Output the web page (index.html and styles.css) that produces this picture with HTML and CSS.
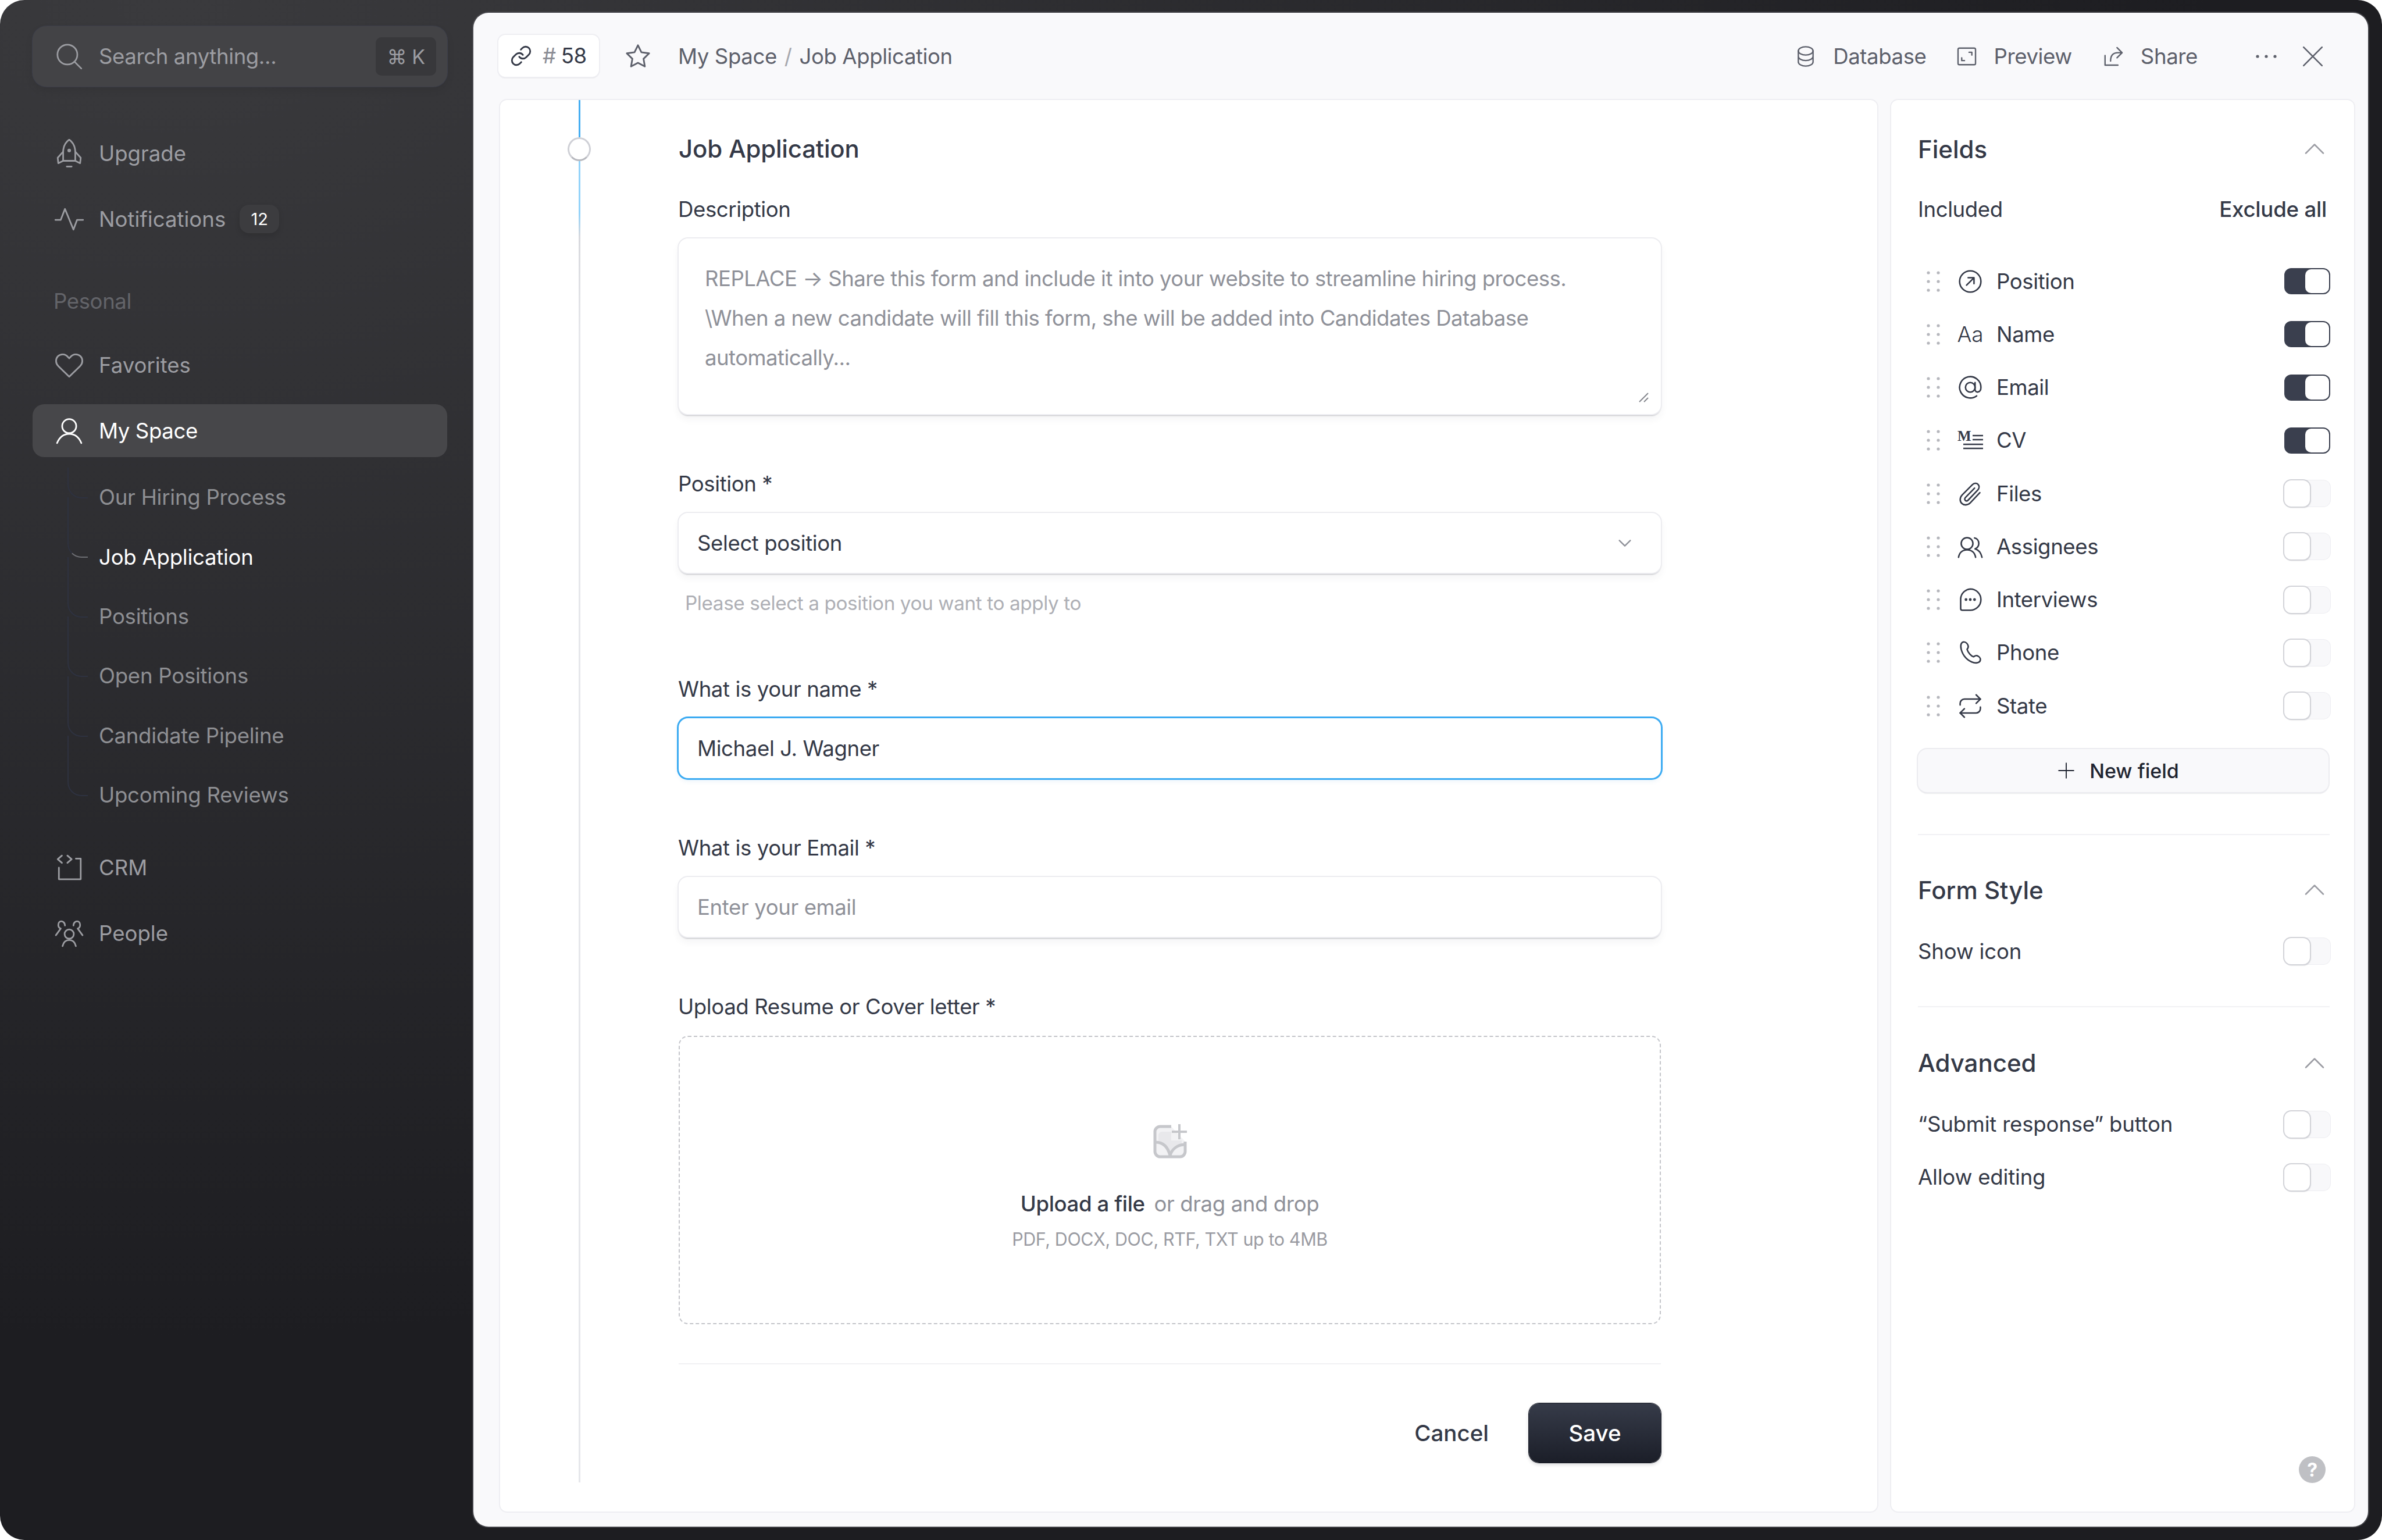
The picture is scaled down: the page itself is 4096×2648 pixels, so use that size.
FILE: index.html
```html
<!DOCTYPE html>
<html lang="en">
<head>
    <meta charset="UTF-8">
    <meta name="viewport" content="width=device-width, initial-scale=1.0">
    <title>Job Application</title>
    <link rel="stylesheet" href="styles.css">
</head>
<body>
    <!-- Shared icons -->
    <svg class="icon-defs" xmlns="http://www.w3.org/2000/svg">
        <symbol id="i-grip" viewBox="0 0 26 38">
            <circle cx="4" cy="4" r="2.6" /><circle cx="21" cy="4" r="2.6" />
            <circle cx="4" cy="19" r="2.6" /><circle cx="21" cy="19" r="2.6" />
            <circle cx="4" cy="34" r="2.6" /><circle cx="21" cy="34" r="2.6" />
        </symbol>
        <symbol id="i-up" viewBox="0 0 24 24"><path d="M3 16.5 12 7.5l9 9" /></symbol>
    </svg>

    <div class="app">
        <!-- Sidebar -->
        <aside class="sidebar">
            <div class="search">
                <svg class="icon search-icon" viewBox="0 0 24 24"><circle cx="10.5" cy="10.5" r="8.2" /><path d="M16.5 16.5 22 22" /></svg>
                <span class="search-text">Search anything...</span>
                <span class="kbd">⌘ K</span>
            </div>

            <nav class="nav">
                <a class="nav-item">
                    <svg class="icon nav-icon" viewBox="0 0 24 24"><path d="M12 .5C8.500 3 7 7 7 11v7h10v-7c0-4-1.500-8-5-10.500z" /><circle cx="12" cy="9.500" r=".8" /><path d="M7 10.500 2.500 15.500l.5 4.500 4-2M17 10.500l4.500 5-.5 4.500-4-2M10 22.700h4" /></svg>
                    <span>Upgrade</span>
                </a>
                <a class="nav-item">
                    <svg class="icon nav-icon" viewBox="0 0 24 24"><path d="M.5 12.500H5L8.500 3.500 15.500 20.500l3-8h5" /></svg>
                    <span>Notifications</span>
                    <span class="badge">12</span>
                </a>
                <div class="nav-label">Pesonal</div>
                <a class="nav-item">
                    <svg class="icon nav-icon" viewBox="0 0 24 24"><path d="M12 21.500 3 12.700C.6 10.300.6 6.800 2.700 4.600c2.300-2.200 6-2 8 .3l1.300 1.400 1.300-1.400c2-2.300 5.700-2.500 8-.3 2.100 2.200 2.100 5.700-.3 8.100z" /></svg>
                    <span>Favorites</span>
                </a>
                <a class="nav-item nav-item-active">
                    <svg class="icon nav-icon" viewBox="0 0 24 24"><circle cx="12" cy="8" r="5.800" /><path d="M2 22c2-4.800 5.500-7.500 10-7.500s8 2.700 10 7.500" /></svg>
                    <span>My Space</span>
                </a>
                <div class="sub-nav">
                    <a class="sub-item">Our Hiring Process</a>
                    <a class="sub-item sub-item-active">Job Application</a>
                    <a class="sub-item">Positions</a>
                    <a class="sub-item">Open Positions</a>
                    <a class="sub-item">Candidate Pipeline</a>
                    <a class="sub-item">Upcoming Reviews</a>
                </div>
                <a class="nav-item nav-item-crm">
                    <svg class="icon nav-icon" viewBox="0 0 24 24"><path d="M3.500 12v9.500h18V4.500h-4M6 2 2.500 5 6 8M10.500 2 14 5l-3.500 3" /></svg>
                    <span>CRM</span>
                </a>
                <a class="nav-item">
                    <svg class="icon nav-icon" viewBox="0 0 24 24"><circle cx="12" cy="12.500" r="3.800" /><path d="M6.500 22.500c.8-3.300 2.800-5 5.500-5s4.700 1.700 5.500 5M8.500 5.500C8.500 3.500 7.200 2 5.600 2S3 3.300 3 5c0 1.400.8 2.500 2 3l-4 5.500M15.500 5.500c0-2 1.300-3.500 2.900-3.500S21 3.300 21 5c0 1.400-.8 2.500-2 3l4 5.500" /></svg>
                    <span>People</span>
                </a>
            </nav>
        </aside>

        <!-- Main panel -->
        <main class="panel">
            <header class="top-bar">
                <div class="ref-pill">
                    <svg class="icon link-icon" viewBox="0 0 24 24"><path d="M10 13a5 5 0 0 0 7.540.540l3-3a5 5 0 0 0-7.070-7.070l-1.720 1.710" /><path d="M14 11a5 5 0 0 0-7.540-.540l-3 3a5 5 0 0 0 7.070 7.070l1.710-1.710" /></svg>
                    <span class="ref-hash">#</span>
                    <span>58</span>
                </div>
                <svg class="icon star-icon" viewBox="0 0 24 24"><path d="M12 2l3.090 6.260L22 9.270l-5 4.870 1.180 6.880L12 17.770l-6.180 3.250L7 14.140 2 9.270l6.910-1.010z" /></svg>
                <div class="breadcrumb">My Space <span class="crumb-sep">/</span> Job Application</div>

                <div class="actions">
                    <a class="action action-db">
                        <svg class="icon action-icon" viewBox="0 0 24 24"><ellipse cx="12" cy="6" rx="8" ry="4.500" /><path d="M4 6v12c0 2.500 3.600 4.500 8 4.500s8-2 8-4.500V6M4 12c0 2.500 3.600 4.500 8 4.500s8-2 8-4.500" /></svg>
                        Database
                    </a>
                    <a class="action action-preview">
                        <svg class="icon action-icon" viewBox="0 0 24 24"><rect x="2.500" y="3" width="19" height="18" rx="1.500" /><path d="M14.500 7.500h3v3M6.500 13.500v3h3" /></svg>
                        Preview
                    </a>
                    <a class="action action-share">
                        <svg class="icon action-icon" viewBox="0 0 24 24"><path d="M3 11v10.500h14M21.500 8l-5.500-5.500M21.500 8 16 13.500M21.500 8H17c-5 0-8 3-8 9" /></svg>
                        Share
                    </a>
                    <svg class="icon more-icon" viewBox="0 0 40 12"><circle cx="5" cy="6" r="2.600" /><circle cx="20" cy="6" r="2.600" /><circle cx="35" cy="6" r="2.600" /></svg>
                    <svg class="icon close-icon" viewBox="0 0 24 24"><path d="M2 2l20 20M22 2 2 22" /></svg>
                </div>
            </header>

            <div class="panel-body">
                <!-- Form card -->
                <section class="form-card">
                    <div class="timeline">
                        <span class="timeline-top"></span>
                        <span class="timeline-dot"></span>
                        <span class="timeline-rest"></span>
                    </div>

                    <form class="form">
                        <h2 class="form-title">Job Application</h2>

                        <div class="field field-first">
                            <label class="field-label">Description</label>
                            <div class="area-wrap">
                                <textarea class="control control-area" placeholder="REPLACE → Share this form and include it into your website to streamline hiring process. &#10;\When a new candidate will fill this form, she will be added into Candidates Database automatically..."></textarea>
                                <svg class="area-grip" viewBox="0 0 17 17"><path d="M16 1 1 16M16 9l-7 7" /></svg>
                            </div>
                        </div>

                        <div class="field">
                            <label class="field-label">Position *</label>
                            <div class="control control-select">
                                <span>Select position</span>
                                <svg class="icon select-chevron" viewBox="0 0 24 24"><path d="M4 8l8 8 8-8" /></svg>
                            </div>
                            <p class="field-hint">Please select a position you want to apply to</p>
                        </div>

                        <div class="field field-name">
                            <label class="field-label">What is your name *</label>
                            <input class="control control-focus" type="text" value="Michael J. Wagner">
                        </div>

                        <div class="field">
                            <label class="field-label">What is your Email *</label>
                            <input class="control" type="text" placeholder="Enter your email">
                        </div>

                        <div class="field">
                            <label class="field-label">Upload Resume or Cover letter *</label>
                            <div class="dropzone">
                                <svg class="upload-icon" viewBox="0 0 60 60"><path d="M32 4H13a9 9 0 0 0-9 9v34a9 9 0 0 0 9 9h34a9 9 0 0 0 9-9V30" fill="#f2f2f4" stroke="#c6c7cb" stroke-width="5" /><path d="M32 13h-16a6 6 0 0 0-6 6v13c9 0 16 5 20 16 3-8 9-13 20-14v-6H32z" fill="#e8e8eb" /><path d="M5 31c12 0 21 7 25 23M30 54c3-11 12-18 25-19" fill="none" stroke="#c6c7cb" stroke-width="5" /><path d="M46 0v26M33 13h26" fill="none" stroke="#c6c7cb" stroke-width="4" /></svg>
                                <div class="drop-text"><strong>Upload a file</strong> or drag and drop</div>
                                <div class="drop-sub">PDF, DOCX, DOC, RTF, TXT up to 4MB</div>
                            </div>
                        </div>

                        <div class="form-footer">
                            <button class="btn-cancel" type="button">Cancel</button>
                            <button class="btn-save" type="button">Save</button>
                        </div>
                    </form>
                </section>

                <!-- Settings card -->
                <aside class="side-card">
                    <div class="side-head">
                        <h3>Fields</h3>
                        <svg class="icon side-chevron"><use href="#i-up" /></svg>
                    </div>
                    <div class="included">
                        <span>Included</span>
                        <a class="exclude">Exclude all</a>
                    </div>

                    <div class="field-list">
                        <div class="field-row">
                            <svg class="grip"><use href="#i-grip" /></svg>
                            <svg class="icon row-icon" viewBox="0 0 24 24"><circle cx="12" cy="12" r="10" /><path d="M8.500 15.500l7-7M10 8.500h5.500V14" /></svg>
                            <span class="row-label">Position</span>
                            <span class="toggle toggle-on"></span>
                        </div>
                        <div class="field-row">
                            <svg class="grip"><use href="#i-grip" /></svg>
                            <span class="row-glyph">Aa</span>
                            <span class="row-label">Name</span>
                            <span class="toggle toggle-on"></span>
                        </div>
                        <div class="field-row">
                            <svg class="grip"><use href="#i-grip" /></svg>
                            <svg class="icon row-icon" viewBox="0 0 24 24"><circle cx="12" cy="12" r="4.500" /><path d="M16.500 7.500v6.500c0 3.500 5.500 3.500 5.500-2a10 10 0 1 0-4 8" /></svg>
                            <span class="row-label">Email</span>
                            <span class="toggle toggle-on"></span>
                        </div>
                        <div class="field-row">
                            <svg class="grip"><use href="#i-grip" /></svg>
                            <svg class="row-icon md-icon" viewBox="0 0 44 36"><text x="0" y="19" class="md-letter">M</text><path d="M26 10h18M26 17h18M10 25h34M10 32h34" /></svg>
                            <span class="row-label">CV</span>
                            <span class="toggle toggle-on"></span>
                        </div>
                        <div class="field-row">
                            <svg class="grip"><use href="#i-grip" /></svg>
                            <svg class="icon row-icon" viewBox="0 0 24 24"><path d="M21 11l-9 9.500c-2.500 2.500-6 2.500-8 .5s-2-5.500.5-8L14 3.500c1.700-1.700 4-1.700 5.300-.3s1.300 3.600-.3 5.300l-9 9.500c-.9.900-2 .9-2.700.2s-.7-1.800.2-2.700l8.500-8.800" /></svg>
                            <span class="row-label">Files</span>
                            <span class="toggle"></span>
                        </div>
                        <div class="field-row">
                            <svg class="grip"><use href="#i-grip" /></svg>
                            <svg class="icon row-icon" viewBox="0 0 24 24"><circle cx="9" cy="9" r="5.500" /><path d="M1 22c.8-4.500 3.800-7 8-7s7.200 2.500 8 7M16 3.800c2.500.5 4 2.700 4 5.200 0 2-1 4-3.500 5 3 .8 5.500 3.500 6.500 8" /></svg>
                            <span class="row-label">Assignees</span>
                            <span class="toggle"></span>
                        </div>
                        <div class="field-row">
                            <svg class="grip"><use href="#i-grip" /></svg>
                            <svg class="icon row-icon" viewBox="0 0 24 24"><path d="M12 2a10 10 0 0 1 0 20H4.500A1.500 1.500 0 0 1 3 20.500V11a10 10 0 0 1 9-9z" /><circle cx="8" cy="12" r=".6" /><circle cx="12" cy="12" r=".6" /><circle cx="16" cy="12" r=".6" /></svg>
                            <span class="row-label">Interviews</span>
                            <span class="toggle"></span>
                        </div>
                        <div class="field-row">
                            <svg class="grip"><use href="#i-grip" /></svg>
                            <svg class="icon row-icon" viewBox="0 0 24 24"><path d="M6 2C3.500 2 2.500 5 3.500 9c1.500 6 6 11 12 12.500 3.500.8 6-.5 6-3 0-1.500-1.500-3-3-3.500-1.700-.5-2.500.5-3.500 1-2-.5-5-3.500-6-7 .8-1 1.500-2 1-3.500C9.500 4 8 2 6 2z" /></svg>
                            <span class="row-label">Phone</span>
                            <span class="toggle"></span>
                        </div>
                        <div class="field-row">
                            <svg class="grip"><use href="#i-grip" /></svg>
                            <svg class="icon row-icon" viewBox="0 0 24 24"><path d="M17.500 1.500l4 4-4 4" /><path d="M2.500 11V9.500a4 4 0 0 1 4-4h15" /><path d="M6.500 22.500l-4-4 4-4" /><path d="M21.500 13v1.500a4 4 0 0 1-4 4h-15" /></svg>
                            <span class="row-label">State</span>
                            <span class="toggle"></span>
                        </div>
                    </div>

                    <button class="new-field" type="button">
                        <svg class="icon plus-icon" viewBox="0 0 24 24"><path d="M12 1v22M1 12h22" /></svg>
                        New field
                    </button>

                    <hr class="side-rule">
                    <div class="side-head side-head-next">
                        <h3>Form Style</h3>
                        <svg class="icon side-chevron"><use href="#i-up" /></svg>
                    </div>
                    <div class="option-row option-first">
                        <span>Show icon</span>
                        <span class="toggle"></span>
                    </div>

                    <hr class="side-rule side-rule-tight">
                    <div class="side-head side-head-last">
                        <h3>Advanced</h3>
                        <svg class="icon side-chevron"><use href="#i-up" /></svg>
                    </div>
                    <div class="option-row option-first">
                        <span>“Submit response” button</span>
                        <span class="toggle"></span>
                    </div>
                    <div class="option-row">
                        <span>Allow editing</span>
                        <span class="toggle"></span>
                    </div>

                    <span class="help">?</span>
                </aside>
            </div>
        </main>
    </div>
</body>
</html>
```

FILE: styles.css
```css
* {
    box-sizing: border-box;
}

body {
    margin: 0;
    background: #fff;
    font-family: Inter, "Noto Sans", sans-serif;
    font-size: 36.6px;
    letter-spacing: -0.4px;
    color: #343947;
}

.icon-defs {
    display: none;
}

.icon {
    fill: none;
    stroke: currentColor;
    stroke-width: 1.5;
    stroke-linecap: round;
    stroke-linejoin: round;
    flex-shrink: 0;
}

.app {
    display: flex;
    height: 2648px;
    width: 4096px;
    overflow: hidden;
    border-radius: 42px;
    background: radial-gradient(ellipse 3500px 2300px at 300px 0, #3a3a3d, #1d1d21);
}

/* Sidebar */
.sidebar {
    width: 814px;
    flex-shrink: 0;
    padding: 45px 45px 0 56px;
    color: #9c9da2;
}

.search {
    display: flex;
    align-items: center;
    height: 104px;
    padding: 0 19px 0 38px;
    border-radius: 24px;
    background: #434346;
    box-shadow: 0 0 0 1px #3c3e4a, 0 6px 14px rgba(0, 0, 0, 0.08);
}

.search-icon {
    width: 50px;
    height: 50px;
    margin-right: 26px;
    stroke-width: 1.3;
}

.search-text {
    flex: 1;
}

.kbd {
    display: flex;
    align-items: center;
    justify-content: center;
    width: 104px;
    height: 66px;
    border-radius: 10px;
    background: #38383b;
    font-size: 34px;
}

.nav {
    display: flex;
    flex-direction: column;
    margin-top: 69px;
}

.nav-item {
    display: flex;
    align-items: center;
    height: 91px;
    padding-left: 38px;
    margin-bottom: 22px;
    border-radius: 20px;
    letter-spacing: 0;
}

.nav-icon {
    width: 50px;
    height: 50px;
    margin-right: 26px;
    stroke-width: 1.35;
}

.nav-item-active {
    margin-bottom: 0;
    background: #47474a;
    color: #fff;
    letter-spacing: -0.4px;
}

.nav-item-crm {
    margin-top: 28px;
}

.badge {
    display: flex;
    align-items: center;
    justify-content: center;
    width: 68px;
    height: 49px;
    margin-left: 24px;
    border-radius: 16px;
    background: #3c3c3f;
    color: #fff;
    font-size: 29px;
    box-shadow: 0 4px 10px rgba(0, 0, 0, 0.12);
}

.nav-label {
    height: 50px;
    line-height: 50px;
    margin: 49px 0 39px 36px;
    color: #636469;
}

.sub-nav {
    margin-top: 18px;
}

.sub-item {
    position: relative;
    display: flex;
    align-items: center;
    height: 102.4px;
    padding-left: 114px;
    color: #8e8f93;
    letter-spacing: -0.25px;
}

/* tree connector */
.sub-item::before {
    content: "";
    position: absolute;
    left: 60px;
    top: -51px;
    width: 33px;
    height: 102px;
    border-left: 2px solid #2e3240;
    border-bottom: 2px solid #2e3240;
    border-bottom-left-radius: 24px;
}

.sub-item:first-child::before {
    top: 0;
    height: 51px;
}

.sub-item-active {
    color: #fff;
}

.sub-item-active::before {
    border-bottom-color: #6c6d72;
}

/* Main panel */
.panel {
    flex: 1;
    display: flex;
    flex-direction: column;
    margin: 22px 24px 23px 0;
    border-radius: 26px;
    background: #f9f9fb;
    box-shadow: 0 0 0 2px rgba(80, 80, 86, 0.7);
    overflow: hidden;
}

.top-bar {
    display: flex;
    align-items: center;
    flex-shrink: 0;
    height: 148px;
    padding: 2px 76px 0 43px;
    color: #5d606b;
}

.ref-pill {
    display: flex;
    align-items: center;
    width: 173px;
    height: 72px;
    margin-top: -2px;
    padding-left: 20px;
    border-radius: 12px;
    background: #fff;
    color: #343947;
    box-shadow: 0 0 0 2px #eeeef2, 0 2px 2px rgba(50, 55, 70, 0.2);
}

.link-icon {
    width: 38px;
    height: 38px;
    margin-right: 18px;
    stroke-width: 1.8;
}

.ref-hash {
    color: #8b8d95;
    margin-right: 9px;
}

.star-icon {
    width: 46px;
    height: 46px;
    margin: 0 46px 0 44px;
}

.crumb-sep {
    color: #a7a8ae;
    margin: 0 3px;
}

.actions {
    display: flex;
    align-items: center;
    margin-left: auto;
}

.action {
    display: flex;
    align-items: center;
}

.action-icon {
    width: 38px;
    height: 38px;
    margin-right: 28px;
}

.action-db {
    margin-right: 50px;
}

.action-preview {
    margin-right: 52px;
}

.more-icon {
    width: 40px;
    height: 12px;
    margin-left: 98px;
    fill: currentColor;
    stroke: none;
}

.close-icon {
    width: 38px;
    height: 38px;
    margin-left: 41px;
    stroke-width: 1.6;
}

.panel-body {
    flex: 1;
    display: flex;
    gap: 20px;
    padding: 0 22px 24px 44px;
    min-height: 0;
}

.form-card {
    flex: 1;
    display: flex;
    border: 2px solid #eeeef2;
    border-radius: 14px;
    background: #fff;
}

.timeline {
    display: flex;
    flex-direction: column;
    align-items: center;
    width: 272px;
    margin-bottom: 50px;
    flex-shrink: 0;
}

.timeline-top {
    width: 3px;
    height: 64px;
    background: #45aef2;
}

.timeline-dot {
    width: 40px;
    height: 41px;
    border-radius: 50%;
    background: #fff;
    border: 3px solid #cfd0d6;
    border-bottom-color: #b8b9bf;
    flex-shrink: 0;
}

.timeline-rest {
    flex: 1;
    width: 3px;
    background: linear-gradient(#93d3fa 0, #93d3fa 90px, #d8d9de 130px, #e6e7eb 300px);
}

.form {
    width: 1689px;
    margin-left: 35px;
    padding-top: 54px;
}

.form-title {
    margin: 0;
    height: 60px;
    line-height: 60px;
    font-size: 42px;
    font-weight: 500;
    letter-spacing: -0.2px;
}

.field {
    margin-top: 96px;
}

.field-first {
    margin-top: 50px;
}

.field-name {
    margin-top: 104px;
}

.field-label {
    display: block;
    height: 48px;
    line-height: 48px;
    margin: 0 0 26px -1px;
}

.area-wrap {
    position: relative;
}

/* resize corner, drawn over the textarea */
.area-grip {
    position: absolute;
    right: 21px;
    bottom: 20px;
    width: 17px;
    height: 17px;
    fill: none;
    stroke: #85878e;
    stroke-width: 2;
}

.control {
    display: flex;
    align-items: center;
    width: 100%;
    height: 103px;
    padding: 0 32px;
    border: 0;
    border-radius: 16px;
    outline: 0;
    background: #fff;
    font: inherit;
    letter-spacing: inherit;
    color: #343947;
    box-shadow: 0 0 0 2px #ececf0, 0 3px 2px rgba(50, 55, 70, 0.28), 0 8px 14px rgba(50, 55, 70, 0.06);
}

.control::placeholder {
    color: #8f9199;
    opacity: 1;
}

.control-area {
    display: block;
    height: 302px;
    padding: 35px 45px;
    line-height: 68px;
    letter-spacing: -0.55px;
    resize: none;
}

.control-select {
    justify-content: space-between;
}

.select-chevron {
    width: 28px;
    height: 28px;
    margin-right: 16px;
    color: #8f9199;
    stroke-width: 2;
}

.control-focus {
    box-shadow: 0 0 0 3px #3cabf2, 0 4px 10px rgba(50, 130, 200, 0.12);
}

.field-hint {
    margin: 32px 0 0 11px;
    height: 40px;
    line-height: 40px;
    font-size: 33.3px;
    color: #aeafb5;
}

.dropzone {
    display: flex;
    flex-direction: column;
    align-items: center;
    height: 496px;
    padding-top: 150px;
    border: 2px dashed #c4c5ca;
    border-radius: 16px;
}

.upload-icon {
    width: 60px;
    height: 60px;
}

.drop-text {
    margin-top: 53px;
    height: 48px;
    line-height: 48px;
    color: #8f9199;
}

.drop-text strong {
    font-weight: 500;
    color: #343947;
    margin-right: 6px;
}

.drop-sub {
    margin-top: 17px;
    height: 40px;
    line-height: 40px;
    font-size: 30.5px;
    color: #9a9ba2;
}

.form-footer {
    display: flex;
    justify-content: flex-end;
    align-items: center;
    margin-top: 67px;
    padding-top: 67px;
    border-top: 2px solid #f1f1f4;
}

.btn-cancel {
    border: 0;
    background: none;
    padding: 0;
    margin-right: 69px;
    font: inherit;
    font-size: 38.5px;
    font-weight: 500;
    color: #343947;
}

.btn-save {
    width: 227px;
    height: 102px;
    border: 0;
    border-radius: 18px;
    background: linear-gradient(#363b49, #1b1e28);
    box-shadow: 0 0 0 1px #1b1e28, 0 3px 6px rgba(30, 30, 40, 0.2);
    color: #fff;
    font: inherit;
    font-size: 38.5px;
    font-weight: 500;
}

/* Settings card */
.side-card {
    position: relative;
    width: 800px;
    flex-shrink: 0;
    padding: 54px 42px 0 46px;
    border: 2px solid #eeeef2;
    border-radius: 14px;
    background: #fff;
}

.side-head {
    display: flex;
    justify-content: space-between;
    align-items: center;
    height: 60px;
}

.side-head h3 {
    margin: 0;
    font-size: 42px;
    font-weight: 500;
    letter-spacing: 0;
}

.side-chevron {
    width: 40px;
    height: 40px;
    margin-right: 6px;
    color: #9b9ca3;
}

.side-head-next {
    margin-top: 64px;
}

.side-head-last {
    margin-top: 66px;
}

.included {
    display: flex;
    justify-content: space-between;
    align-items: center;
    height: 48px;
    margin-top: 50px;
    padding-right: 5px;
}

.exclude {
    font-weight: 500;
    letter-spacing: -0.2px;
}

.field-list {
    margin-top: 54px;
}

.field-row,
.option-row {
    display: flex;
    align-items: center;
    height: 91.25px;
}

.field-row {
    padding-left: 14px;
}

.option-row {
    justify-content: space-between;
    letter-spacing: -0.2px;
}

.option-first {
    margin-top: 30px;
}

.grip {
    width: 26px;
    height: 38px;
    margin-right: 28px;
    fill: #b6b7bd;
    flex-shrink: 0;
}

.row-icon,
.row-glyph {
    width: 44px;
    height: 44px;
    margin-right: 23px;
    stroke-width: 1.4;
}

.row-glyph {
    display: flex;
    align-items: center;
    justify-content: center;
    font-size: 37px;
    font-weight: 300;
    letter-spacing: 0;
}

.md-icon {
    fill: none;
    stroke: #343947;
    stroke-width: 2.6;
}

.md-letter {
    fill: #343947;
    stroke: none;
    font-family: "Liberation Serif", serif;
    font-size: 25px;
    font-weight: 700;
}

.row-label {
    flex: 1;
}

.toggle {
    position: relative;
    display: block;
    width: 79px;
    height: 45px;
    margin-right: -1px;
    border-radius: 12px;
    background: #f8f8fa;
    box-shadow: 0 0 0 1px #eeeef2;
    flex-shrink: 0;
}

.toggle::after {
    content: "";
    position: absolute;
    top: 0;
    left: 0;
    width: 44px;
    height: 45px;
    border-radius: 12px;
    background: #fff;
    box-shadow: 0 0 0 2px #d2d3d8, 1px 2px 2px rgba(50, 55, 70, 0.25);
}

.toggle-on {
    background: #3a3f4e;
    box-shadow: none;
}

.toggle-on::after {
    left: auto;
    right: 2px;
    top: 2px;
    height: 41px;
    width: 41px;
    border-radius: 10px;
    box-shadow: none;
}

.new-field {
    display: flex;
    align-items: center;
    justify-content: center;
    width: 706px;
    height: 74px;
    margin-top: 29px;
    padding: 0 16px 0 0;
    border: 0;
    border-radius: 16px;
    background: #f9f9fb;
    box-shadow: 0 0 0 2px #ececf0, 0 2px 2px rgba(50, 55, 70, 0.3);
    font: inherit;
    font-size: 34px;
    font-weight: 500;
    color: #1f2430;
}

.plus-icon {
    width: 28px;
    height: 28px;
    margin-right: 26px;
    stroke-width: 1.6;
}

.side-rule {
    height: 2px;
    margin: 72px 0 0;
    border: 0;
    background: #f1f1f4;
}

.side-rule-tight {
    margin-top: 48px;
}

.help {
    position: absolute;
    right: 49px;
    bottom: 49px;
    display: flex;
    align-items: center;
    justify-content: center;
    width: 46px;
    height: 46px;
    border-radius: 50%;
    background: #bfc0c4;
    color: #fff;
    font-size: 32px;
    font-weight: 700;
}
```
